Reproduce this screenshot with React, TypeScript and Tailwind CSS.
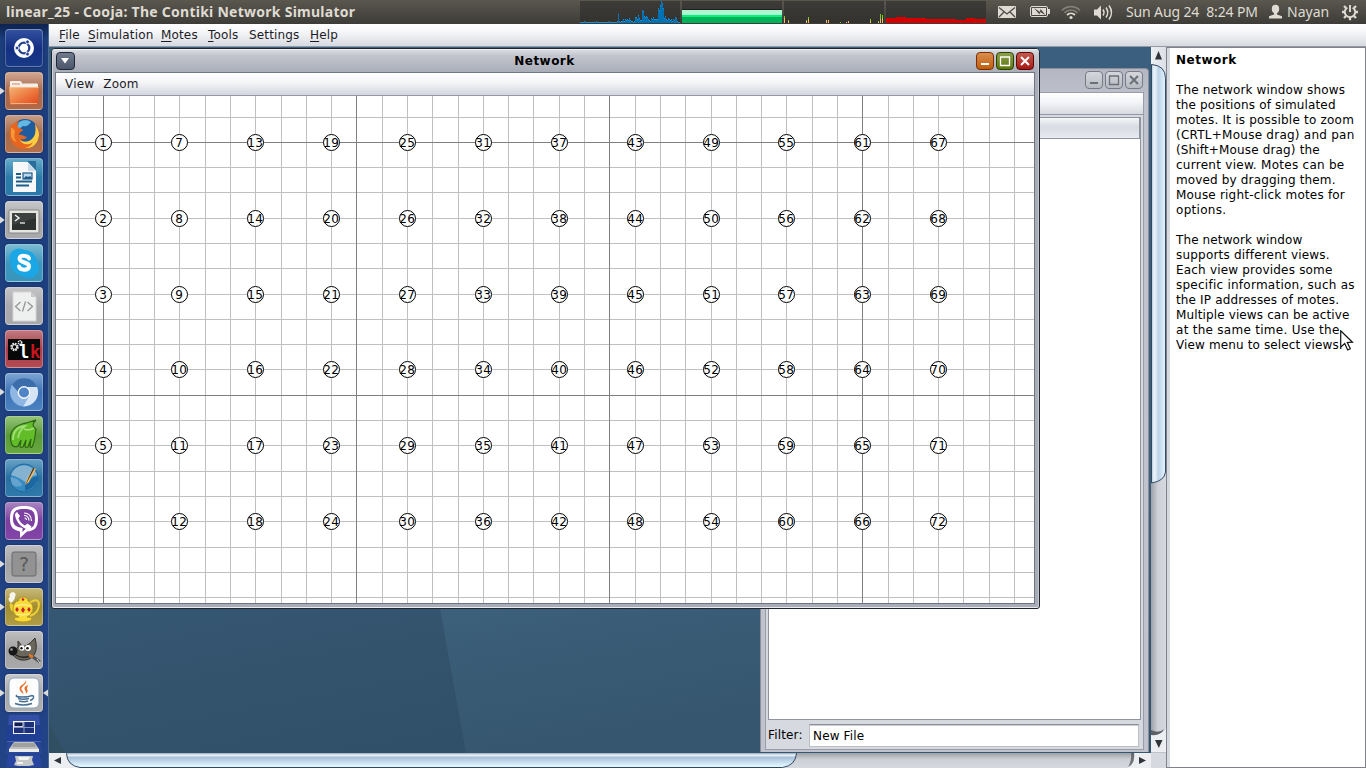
import React from "react";

const range = (a: number, b: number) => Array.from({ length: b - a + 1 }, (_, i) => a + i);

/* ---------- top panel ---------- */

const cpu = [
  1, 1, 1, 1, 2, 1, 1, 1, 1, 1, 1, 1, 1, 1, 1, 1, 2, 1, 1, 1, 1, 1, 1, 1, 1, 1, 1, 1, 1, 2, 1, 1, 1, 1, 1, 1, 1, 2, 9, 2,
  1, 2, 2, 4, 2, 4, 3, 4, 3, 5, 3, 2, 2, 1, 2, 6, 6, 4, 8, 5, 3, 3, 13, 12, 7, 6, 7, 6, 4, 3, 2, 5, 4, 6, 4, 4, 4, 4,
  15, 13, 18, 22, 20, 15, 5, 7, 4, 3, 5, 4, 3, 4, 2, 4, 3, 6, 5, 2, 1, 1,
];
const net: [number, number, number][] = [
  [0, 2, 5], [4, 1, 2], [22, 1, 2], [24, 2, 4], [42, 0, 3], [44, 0, 3], [56, 1, 0],
  [62, 0, 1], [64, 0, 2], [86, 2, 2], [94, 1, 1], [96, 5, 4], [98, 3, 5],
];

function Monitor({ children }: { children: React.ReactNode }) {
  return (
    <svg width="100" height="22" viewBox="0 1 100 22" className="block bg-linear-to-b from-[#3c3b37] to-[#33322e]" shapeRendering="crispEdges">
      {children}
    </svg>
  );
}

function TopPanel() {
  return (
    <div className="flex h-6 shrink-0 items-center bg-linear-to-b from-[#5a574e] to-[#3d3c38] font-['Noto_Sans',sans-serif] text-[#dfdbd2]">
      <div className="w-[580px] pl-1.5 text-[14px] leading-6 font-bold tracking-[0.26px] whitespace-nowrap">
        linear_25 - Cooja: The Contiki Network Simulator
      </div>
      <div className="flex w-[406px] gap-0.5">
        <Monitor>
          {cpu.map((h, i) => (
            <g key={i}>
              <rect x={i} y={23 - h} width="1" height={h} fill="#0072b3" />
              <rect x={i} y={23 - h} width="1" height="1" fill="#1590dc" />
            </g>
          ))}
        </Monitor>
        <Monitor>
          <rect y="9" width="100" height="1" fill="#20201d" />
          <rect y="10" width="100" height="5" fill="#aff5d0" />
          <rect y="15" width="100" height="2" fill="#00f47e" />
          <rect y="17" width="100" height="6" fill="#00b35b" />
        </Monitor>
        <Monitor>
          {net.map(([x, g, o], i) => (
            <g key={i}>
              <rect x={x} y={23 - o} width="1" height={o} fill="#fcba6a" />
              <rect x={x} y={23 - o - g} width="1" height={g} fill="#73d216" />
            </g>
          ))}
        </Monitor>
        <Monitor>
          <path d="M0 18h10v-1h10v1h20v1h30v1h10v-2h9v1h11v4H0z" fill="#d40000" />
        </Monitor>
      </div>
      <svg width="139" height="24" viewBox="986 0 139 24" fill="#dfdbd2">
        <rect x="998" y="6" width="18" height="12" rx="1" />
        <path d="M999 7.500l8 6.500 8-6.500M999 17l5-5M1015 17l-5-5" fill="none" stroke="#4b4943" strokeWidth="1.300" />
        <rect x="1030.500" y="6.500" width="17" height="10" rx="1.500" fill="none" stroke="#dfdbd2" />
        <rect x="1032" y="8" width="14" height="7" />
        <rect x="1048" y="9" width="2" height="5" />
        <path d="M1034 8l6 4 .500-3 5 6-5.500-3-.500 2.500z" fill="#43423d" />
        <g fill="none" strokeWidth="1.700">
          <path d="M1062 10.500a12.500 12.500 0 0 1 18 0" stroke="#827f77" />
          <path d="M1064.500 12.800a9 9 0 0 1 13 0" stroke="#827f77" />
          <path d="M1067 15a6 6 0 0 1 8 0" stroke="#dfdbd2" />
        </g>
        <circle cx="1071" cy="17.500" r="1.600" />
        <path d="M1094 9.500h3l4-4v14l-4-4h-3z" />
        <g fill="none" stroke="#dfdbd2" strokeWidth="1.500">
          <path d="M1103 9.500q2 3 0 6" />
          <path d="M1106 7.500q3.500 5 0 10" />
          <path d="M1109 5.500q5 7 0 14" />
        </g>
      </svg>
      <div className="w-[143px] pl-px text-[14px] leading-6 tracking-[-0.13px] whitespace-nowrap">Sun Aug 24&nbsp; 8:24 PM</div>
      <svg width="19" height="24" viewBox="1268 0 19 24" fill="#dfdbd2">
        <ellipse cx="1275.500" cy="9" rx="3.700" ry="4.200" />
        <path d="M1274 12h3v2.500l5 1.700v2.300h-13v-2.300l5-1.700z" />
      </svg>
      <div className="w-[53px] text-[14px] leading-6 whitespace-nowrap">Nayan</div>
      <svg width="24" height="24" viewBox="1340 0 24 24" fill="none" stroke="#dfdbd2">
        <path d="M1347.300 7.600a5.200 5.200 0 1 0 5.400 0" strokeWidth="1.900" />
        <path d="M1350 5v7" strokeWidth="1.900" />
        <path d="M1345.800 7.800l-1.800-1.800M1354.200 7.800l1.800-1.800M1344.800 12h-2.800M1355.200 12h2.800M1346 16l-2 2M1354 16l2 2M1350 17.500v2.800" strokeWidth="2.300" />
      </svg>
    </div>
  );
}

/* ---------- launcher ---------- */

function Tile({ bg, pip, active, children }: { bg: string; pip?: boolean; active?: boolean; children: React.ReactNode }) {
  return (
    <div className="flex h-[38px] w-12 shrink-0 items-center">
      <svg width="5" height="10" viewBox="0 0 5 10">{pip && <path d="M0 1.500L4.800 5 0 8.500z" fill="#dcdcdc" />}</svg>
      <div className={`h-[38px] w-[38px] rounded-[4px] border border-white/25 border-t-white/45 bg-linear-to-b shadow-[0_0_2px_rgba(0,0,30,0.5)] ${bg}`}>
        <svg width="36" height="36" viewBox="1 1 36 36">{children}</svg>
      </div>
      <svg width="5" height="10" viewBox="0 0 5 10">{active && <path d="M5 1.500L0 5l5 3.500z" fill="#dcdcdc" />}</svg>
    </div>
  );
}

function Launcher() {
  return (
    <div className="flex w-[49px] shrink-0 flex-col gap-[5px] overflow-hidden border-r border-[#4d6a95] bg-linear-to-b from-[#0d2350] via-[#1b3d7b] via-[2%] to-[#224385] pt-[5px]">
      <Tile bg="from-[#32509f] via-[#142f83] to-[#183a86]">
        <circle cx="19" cy="19" r="10" fill="#fff" />
        <circle cx="19" cy="19" r="5.300" fill="none" stroke="#24408e" strokeWidth="2.300" />
        <g stroke="#fff" strokeWidth="1">
          <path d="M19 19h-8M19 19l4-7M19 19l4 7" />
        </g>
        <circle cx="19" cy="19" r="3.800" fill="#fff" />
        <g fill="#24408e" stroke="#fff" strokeWidth=".8">
          <circle cx="12" cy="19" r="1.900" />
          <circle cx="22.500" cy="12.900" r="1.900" />
          <circle cx="22.500" cy="25.100" r="1.900" />
        </g>
      </Tile>
      <Tile bg="from-[#d0a692] via-[#a8694a] to-[#ae6a48]" pip>
        <defs>
          <linearGradient id="fold" x1="0" y1="0" x2="1" y2="1">
            <stop offset="0" stopColor="#f4b577" />
            <stop offset=".5" stopColor="#ee7c42" />
            <stop offset="1" stopColor="#e0451b" />
          </linearGradient>
        </defs>
        <path d="M5 10q0-1 1-1h9q1 0 1.500 1l.5 1.500h15q1 0 1 1V17H5z" fill="#f5efea" />
        <path d="M7 12h8" stroke="#df8560" />
        <path d="M4 15h30l-1 16q0 1.500-1.500 1.500h-25Q5 32.500 5 31z" fill="url(#fold)" />
        <path d="M4.500 15.500h29M6 31.500h26" stroke="#ffc08d" strokeWidth=".8" />
      </Tile>
      <Tile bg="from-[#c79c82] via-[#a56a48] to-[#b67049]">
        <circle cx="20" cy="17.500" r="13.500" fill="#1f5b9f" />
        <path d="M14 7q7-4 12 0-3 5-8 4-4 4-7 2z" fill="#61b8e0" />
        <path d="M6 10c-1 4-2 8-1 13 2 8 9 11 15 11 8 0 14-7 14-15 0-4-2-8-4-10 2 8 0 13-4 16-4 3-9 2-11-1 3 1 6 0 7-2-3 0-5-3-8-2 0-2 2-4 4-4 0-3-4-2-5-4-1-1-1-4 1-6-2 0-4 1-5 3-1 0-2 0-3 1z" fill="#e8651f" />
        <path d="M30 9c2 9-1 15-6 17-5 2-9 0-10-3 2 7 10 8 14 4-1 3-4 5-8 6 8 1 13-5 14-13 0-4-2-8-4-11z" fill="#f9ce42" />
        <path d="M6 13c2 0 4 2 4 4-1 3-1 7 2 10-4-1-6-4-6-7z" fill="#f59835" />
      </Tile>
      <Tile bg="from-[#63abc9] via-[#2c7cab] to-[#2b79aa]">
        <path d="M8 4h15l8 9v20q0 1-1 1H8z" fill="#f6f8fa" />
        <path d="M22 3h9v9z" fill="#2b6e9a" />
        <path d="M23 5v8h8z" fill="#c7dbe8" />
        <g stroke="#1e5d88" strokeWidth="1.800">
          <path d="M11 16h5M11 19.500h5M11 23.500h16M11 27.500h13" />
        </g>
        <rect x="18" y="15" width="9" height="6" fill="#bcd9ed" stroke="#1e5d88" strokeWidth="1.200" />
        <path d="M18 21l3-3 2 1 2-1 2 2v1z" fill="#1e5d88" />
      </Tile>
      <Tile bg="from-[#c7c7ca] via-[#a5a5a9] to-[#aaaaad]" pip>
        <rect x="4" y="9" width="30" height="23" rx="1" fill="#e6e6e1" stroke="#868686" />
        <rect x="7" y="12" width="24" height="17" fill="#2d312f" />
        <path d="M10 14l4 3-4 3" fill="none" stroke="#f2f2f2" strokeWidth="1.500" />
        <path d="M15 22h5" stroke="#f2f2f2" strokeWidth="1.300" />
        <path d="M7 12h24v5L7 24z" fill="#fff" opacity=".08" />
      </Tile>
      <Tile bg="from-[#7abbd2] via-[#3c97be] to-[#3a95bd]">
        <circle cx="14" cy="14" r="9.500" fill="#1ba7e5" />
        <circle cx="24" cy="24" r="10" fill="#1ba7e5" />
        <circle cx="19" cy="19" r="13" fill="#1ba7e5" />
        <path d="M24 14.500c-1-3.500-9.500-4-9.500 0 0 5 10 3 9.500 8-.5 4.500-9 4-10 0" fill="none" stroke="#fff" strokeWidth="4" strokeLinecap="round" />
      </Tile>
      <Tile bg="from-[#c4c4c6] via-[#aaaaae] to-[#a9a9ac]">
        <path d="M8 5h18l5 5v24H8z" fill="#eeefef" stroke="#d5d5d5" />
        <path d="M26 5v5h5z" fill="#c8c8c8" />
        <path d="M15.500 15l-5 4.500 5 4.500M22.500 15l5 4.500-5 4.500M20.500 14.500l-3 10" fill="none" stroke="#969696" strokeWidth="1.300" />
      </Tile>
      <Tile bg="from-[#bf777f] via-[#ae3a46] to-[#b34b54]">
        <rect x="3" y="9" width="32" height="21" fill="#080808" />
        <g fill="none" stroke="#e9e9e9">
          <circle cx="9.500" cy="17" r="3.200" strokeWidth="2" strokeDasharray="1.700 .8" />
          <circle cx="9.500" cy="17" r="2.300" />
          <circle cx="15" cy="12.500" r="1.700" strokeWidth="1.600" strokeDasharray="1.100 .6" />
        </g>
        <text x="19" y="28" textAnchor="middle" fontSize="17" fontWeight="bold" fontFamily="DejaVu Sans Mono, monospace" fill="#fff">l</text>
        <text x="30" y="28" textAnchor="middle" fontSize="17" fontWeight="bold" fontFamily="DejaVu Sans Mono, monospace" fill="#c9151d">k</text>
      </Tile>
      <Tile bg="from-[#7aa3d1] via-[#3e73b5] to-[#4a82c1]" pip>
        <circle cx="19" cy="19.500" r="14" fill="#78a4d9" />
        <path d="M7 12a14 14 0 0 1 25 2H19q-4 0-6 5z" fill="#3b6dab" />
        <path d="M7 12q-4 8 1 15 4 6 10 6l5-8q-6 1-9-5z" fill="#90b6e3" />
        <path d="M32 14q3 7-2 14-4 5-12 5.500l6-10q2-6-2-9.500z" fill="#d6e5f6" />
        <circle cx="19" cy="19.500" r="6.400" fill="#f5f9fd" />
        <circle cx="19" cy="19.500" r="5" fill="#5084c6" />
      </Tile>
      <Tile bg="from-[#93c477] via-[#5b9b37] to-[#67a83f]">
        <path d="M7 29c-4-10 0-18 10-21 5-1 8-2 14-4-4 4-4 6 0 9-1 9-2 15-4 18-1 1-2 0-2-1l1-7-3 8q-3 1-3-1l1-6-3 7q-3 1-3-1l1-6-3 6q-3 2-6-1z" fill="#61bd28" stroke="#2d6415" strokeWidth="1.200" />
        <path d="M8 24c0-8 4-13 12-14-4 3-6 6-7 12M19 13q5 2 10-1" fill="none" stroke="#a1dd76" strokeWidth="1.800" />
      </Tile>
      <Tile bg="from-[#66a1c5] via-[#28709f] to-[#2f79aa]">
        <circle cx="19" cy="19" r="14" fill="#348bc2" stroke="#2368a0" />
        <path d="M6 16a13.500 13.500 0 0 1 26 0q-7 1-12 7-6-5-14-7z" fill="#85b2d0" />
        <path d="M5.500 18q8 1 12 8-5 3-10 0-2-4-2-8z" fill="#6fa9cf" opacity=".8" />
        <path d="M20 26q5-8 13-9-1 12-13 15z" fill="#1c68a2" />
        <path d="M20 26l1-4 7-13 3 1-7 13z" fill="#f2bd60" />
        <path d="M28 9l1.500.5-7.500 14-2 3z" fill="#3c3c3c" />
      </Tile>
      <Tile bg="from-[#a883c0] via-[#7b3f9f] to-[#8345a8]">
        <path d="M19 4c10 0 14 3 14 13 0 9-4 12-11 12.500L15 36v-6.500C8 28 5 25 5 17 5 7 9 4 19 4z" fill="#fff" />
        <path d="M19 7c8 0 11 2 11 10s-3 9.500-9 9.500L17.500 30v-4C11 25 8 23 8 17 8 9 11 7 19 7z" fill="#7d41a2" />
        <path d="M12 10l3 4-1.500 2.500q2 5 6.500 7l2.500-2 4 3q-1.500 3.500-4 3C16 25 11 20 10 13q0-2 2-3z" fill="#fff" />
        <path d="M19 11q7 0 7.500 8M19 13.500q4.500 0 5 5M19.500 16q2 0 2 2" fill="none" stroke="#fff" strokeWidth="1.200" />
      </Tile>
      <Tile bg="from-[#bcbcbf] via-[#a5a5a8] to-[#adadaf]" pip>
        <rect x="7" y="7" width="24" height="24" rx="2" fill="#929292" stroke="#696969" />
        <text x="19" y="26" textAnchor="middle" fontSize="19" fontFamily="DejaVu Sans, sans-serif" fill="#595959">?</text>
      </Tile>
      <Tile bg="from-[#c6b977] via-[#a18d30] to-[#b19d46]" pip>
        <path d="M24 15q9-6 10 1 0 9-9 12" fill="none" stroke="#edce35" strokeWidth="2" />
        <path d="M9 24q-5-1-4-9 3 1 5 4z" fill="#efcf36" />
        <path d="M5 14q-3-3 0-5-2-4 3-5 4 1 2 5 0 3-4 6z" fill="#f6f4ec" />
        <path d="M8 21q0-7 6-8.500Q13 10 19 9q5 1 4 4 5 2 5 8-1 6-6 8 5 0 5 2-2 3-9 3t-9-3q0-2 5-2-6-2-6-8z" fill="#f7db39" stroke="#ab8716" strokeWidth=".7" />
        <path d="M10 18q8-3 16 0M11 26q7 2 14 0" fill="none" stroke="#fff49e" />
        <g fill="#cc1f27">
          <path d="M12 19l1.800 2.500L12 24l-1.800-2.500zM18 19l2 3-2 3-2-3zM24 19l1.800 2.500L24 24l-1.800-2.500z" />
          <circle cx="18" cy="11.500" r="1.300" />
        </g>
      </Tile>
      <Tile bg="from-[#bdbdbd] via-[#a2a2a4] to-[#a9a9a9]">
        <path d="M30 7q3 11-1 17-4 6-13 5Q8 27 6 20q6-1 8-5 7 3 16-8z" fill="#6b675c" stroke="#34322d" />
        <path d="M13 16l0-6 4 5" fill="#6b675c" stroke="#34322d" />
        <circle cx="8" cy="20" r="4.500" fill="#171717" />
        <circle cx="6.500" cy="18.500" r="1.300" fill="#989898" />
        <circle cx="17" cy="17" r="2.700" fill="#fff" />
        <circle cx="23" cy="17" r="3" fill="#fff" />
        <circle cx="16.500" cy="17.300" r="1.200" fill="#111" />
        <circle cx="22.500" cy="17.300" r="1.300" fill="#111" />
        <path d="M11 24q6 4 14 1" fill="none" stroke="#222" strokeWidth="1.400" />
        <path d="M24 24l5 2.500" stroke="#e77524" strokeWidth="2.600" />
        <path d="M28 26l7 5" stroke="#4e5256" strokeWidth="3" />
        <path d="M32 28l3 4" stroke="#dfdfdf" strokeWidth="1" />
      </Tile>
      <Tile bg="from-[#c7c7c8] via-[#a7a7a8] to-[#afafb0]" pip active>
        <rect x="4" y="4" width="30" height="30" rx="5" fill="#fdfdfd" stroke="#8fa9bd" />
        <path d="M21 6q1 3-3 6-3 3-.5 5 1 2 1 3-6-4-3-8 5-3 5.500-6zM23 11q-5 2-3 5t0 4q4-2 2-5 0-1 1-4z" fill="#e66f25" />
        <g fill="none" stroke="#476f93" strokeWidth="1.400">
          <path d="M12 21q-3 2 5 2t9-1.500M13 24.500q5 1.500 11 0M14 27q5 1.500 9 0M10 29.500q8 3 17 0M26 21.500q4 0 2 3-1 1.500-3 2" />
        </g>
      </Tile>
      <div className="-mt-0.5 flex flex-col items-center">
        <svg width="36" height="27" viewBox="0 0 36 27">
          <path d="M3 0h30l3 26H0z" fill="#203e94" />
          <path d="M3 0h30l1 10H2z" fill="#3350a6" />
          <rect x="7.500" y="6.500" width="21" height="12" fill="#1b327b" stroke="#f0f0f0" />
          <path d="M18 7v11M8 12.500h20" stroke="#8a96c2" />
          <path d="M8 7h9v4.500H8z" fill="#0f1d50" stroke="#fff" strokeWidth=".8" />
          <path d="M1 26.500h34" stroke="#4b67ae" />
        </svg>
        <svg width="36" height="13" viewBox="0 0 36 13">
          <path d="M2 0h32l2 12H0z" fill="#29479a" />
          <path d="M8 0h20l5 7H3z" fill="#bfc0bf" />
          <path d="M3 7h30v3H3z" fill="#ececea" />
          <path d="M8 1h20l2 4H6z" fill="#8a8c8d" opacity=".6" />
        </svg>
        <svg width="36" height="13" viewBox="0 0 36 13">
          <path d="M2 0h32l2 12H0z" fill="#2846a0" />
          <path d="M9 1h18l-1 4 2 5-5 1H12l-4-1 2-4z" fill="#c7c9c9" />
          <path d="M12 2h12l-2 3H13zM11 7h6v2h-6z" fill="#f2f2f2" />
        </svg>
      </div>
    </div>
  );
}

/* ---------- desktop windows ---------- */

function WinButton({ kind, tone }: { kind: "min" | "max" | "close"; tone: string }) {
  return (
    <div className={`flex h-[18px] w-[18px] items-center justify-center rounded-[4px] border bg-linear-to-b ${tone}`}>
      <svg width="16" height="16" viewBox="0 0 16 16" fill="none" stroke="currentColor">
        {kind === "min" && <path d="M4 11h8" strokeWidth="2" />}
        {kind === "max" && <path d="M3 4h10M3.500 4v8.500h9V4" strokeWidth="1.300" />}
        {kind === "close" && <path d="M4 4l8 8M12 4l-8 8" strokeWidth="2" />}
      </svg>
    </div>
  );
}

const gridX = (k: number) => Math.round(103.45 + 25.294 * k);
const gridY = (k: number) => Math.round(141.83 + 25.294 * k);

function NetworkCanvas() {
  return (
    <svg width="978" height="507" viewBox="56 96 978 507" className="block bg-white">
      <g shapeRendering="crispEdges">
        {range(-1, 36).map((k) => (
          <rect key={k} x={gridX(k)} y="96" width="1" height="507" fill="#c0c0c0" />
        ))}
        {range(-1, 18).map((k) => (
          <rect key={k} x="56" y={gridY(k)} width="978" height="1" fill="#c0c0c0" />
        ))}
        {[0, 10, 20, 30].map((k) => (
          <rect key={k} x={gridX(k)} y="96" width="1" height="507" fill="#808080" />
        ))}
        {[0, 10].map((k) => (
          <rect key={k} x="56" y={gridY(k)} width="978" height="1" fill="#808080" />
        ))}
      </g>
      {range(0, 71).map((n) => {
        const x = gridX(3 * Math.floor(n / 6));
        const y = gridY(3 * (n % 6));
        return (
          <g key={n}>
            <circle cx={x + 0.5} cy={y + 0.5} r="8" fill="#fff" stroke="#000" />
            <text x={x + 0.2} y={y + 5} textAnchor="middle" fontSize="12" letterSpacing="0.36" fontFamily="DejaVu Sans, sans-serif">
              {n + 1}
            </text>
          </g>
        );
      })}
    </svg>
  );
}

function NetworkWindow() {
  return (
    <div className="absolute top-[1px] left-[2px] flex h-[561px] w-[989px] flex-col rounded-t-[4px] rounded-b-[3px] border border-[#1f262e] bg-[#a9aeb9]">
      <div className="flex flex-1 flex-col rounded-[3px] border border-t-[#eceef0] border-r-[#c4c8d0] border-b-[#e9ebee] border-l-[#d0d3d9] bg-linear-to-b from-[#d9dce1] via-[#c3c6ce] via-[1%] to-[#a9adb8] to-[4%]">
        <div className="flex h-[22px] items-center justify-between pr-[4px] pl-[3px]">
          <div className="flex h-[18px] w-[19px] items-center justify-center rounded-[4px] border border-[#1e2638] bg-linear-to-b from-[#717b8d] to-[#4b566b]">
            <svg width="9" height="6" viewBox="0 0 9 6"><path d="M0 0h8L4 5.500z" fill="#fff" /></svg>
          </div>
          <div className="pl-[38px] text-[12px] font-bold tracking-[0.45px] text-black">Network</div>
          <div className="flex gap-[2px]">
            <WinButton kind="min" tone="border-[#7c2d05] from-[#d98e4b] to-[#c05e05] text-white" />
            <WinButton kind="max" tone="border-[#2c4207] from-[#8da04c] to-[#5d7700] text-white" />
            <WinButton kind="close" tone="border-[#5d0705] from-[#c4584f] to-[#a61410] text-white" />
          </div>
        </div>
        <div className="mx-[2px] flex w-[980px] flex-col border border-[#6c7685]">
          <div className="flex h-[23px] items-center gap-[9px] border-b border-[#9597a4] bg-linear-to-b from-white via-[#f3f4f7] via-45% to-[#d3d6de] pl-[9px] text-[#1c1c26]">
            <span className="tracking-[0.2px]">View</span>
            <span className="tracking-[0.2px]">Zoom</span>
          </div>
          <NetworkCanvas />
        </div>
      </div>
    </div>
  );
}

function EditorWindow() {
  const tone = "border-[#777b86] from-[#d5d7dc] to-[#b7bac2] text-[#6b6f78]";
  return (
    <div className="absolute top-[21px] left-[711px] flex h-[684px] w-[389px] flex-col rounded-t-[4px] border border-b-0 border-[#8b8d98] bg-linear-to-b from-[#b4b7c1] to-[#c0c3cd] to-[5%] pb-[2px]">
      <div className="flex h-[23px] items-start justify-end gap-[2px] pt-[2px] pr-[5px]">
        <WinButton kind="min" tone={tone} />
        <WinButton kind="max" tone={tone} />
        <WinButton kind="close" tone={tone} />
      </div>
      <div className="mr-[4px] ml-[4px] flex flex-1 flex-col border border-[#9a9da8] bg-[#d6d9df]">
        <div className="h-[22px] border-b border-[#9597a4] bg-linear-to-b from-white via-[#f3f4f7] via-45% to-[#d6d9df]" />
        <div className="mt-[2px] mr-[2px] ml-[2px] flex h-[603px] flex-col border border-[#9094a0] bg-white">
          <div className="h-[21px] border-r border-b border-[#9094a0] bg-linear-to-b from-[#f5f6f8] via-[#d8dbe2] via-45% to-[#e8ebf1]" />
        </div>
        <div className="flex flex-1 items-center justify-between pt-px pr-[4px] pl-[2px]">
          <span className="tracking-[0.15px]">Filter:</span>
          <div className="h-[23px] w-[330px] border border-[#bdbfc6] border-t-[#8c8e98] bg-white pl-[3px] leading-[22px] tracking-[0.15px] shadow-[inset_0_2px_1px_-1px_#c9cbd1]">New File</div>
        </div>
      </div>
    </div>
  );
}

function Desktop() {
  return (
    <div className="relative h-[706px] w-[1102px] overflow-hidden bg-[#3a5d7b]">
      <svg width="1102" height="706" className="block">
        <defs>
          <linearGradient id="deskA" x1="0" y1="0" x2=".3" y2="1">
            <stop offset="0" stopColor="#3a6080" />
            <stop offset=".65" stopColor="#385a76" />
            <stop offset="1" stopColor="#304f68" />
          </linearGradient>
          <linearGradient id="deskB" x1="0" y1="0" x2=".2" y2="1">
            <stop offset="0" stopColor="#3a6080" />
            <stop offset=".8" stopColor="#3c5f7a" />
            <stop offset="1" stopColor="#35566e" />
          </linearGradient>
        </defs>
        <rect width="1102" height="706" fill="url(#deskA)" />
        <path d="M300 0L391 561l26 145h685V0z" fill="url(#deskB)" />
        <path d="M0 677l16 29H0z" fill="#305061" />
      </svg>
      <EditorWindow />
      <NetworkWindow />
    </div>
  );
}

function VerticalScrollbar() {
  return (
    <svg width="15" height="706" viewBox="1151 47 15 706" className="block">
      <defs>
        <linearGradient id="vt"><stop offset="0" stopColor="#9da0a8" /><stop offset=".45" stopColor="#cdd0d6" /><stop offset="1" stopColor="#d6d9df" /></linearGradient>
        <linearGradient id="vth"><stop offset="0" stopColor="#b1c6d9" /><stop offset=".2" stopColor="#eef6fb" /><stop offset=".5" stopColor="#bdd3e6" /><stop offset="1" stopColor="#e5f5ff" /></linearGradient>
        <linearGradient id="vb"><stop offset="0" stopColor="#eef0f3" /><stop offset="1" stopColor="#dcdfe4" /></linearGradient>
      </defs>
      <rect x="1151" y="47" width="15" height="706" fill="url(#vt)" />
      <path d="M1151 47h15v28q-2-10-15-11z" fill="url(#vb)" />
      <path d="M1151.500 64.500q14 1 14 14V472q-1 9-14 11z" fill="url(#vth)" stroke="#314b65" />
      <path d="M1158.500 51l3.500 8.500h-7z" fill="#30353c" />
      <path d="M1151 731q11 4 15-2v24h-15z" fill="#eceef1" />
      <path d="M1151 730q8 4 13-1-3 7-13 6z" fill="#5c5f65" />
      <path d="M1155 740h7.500l-3.700 8z" fill="#30353c" />
      <path d="M1151 752.500h15" stroke="#bfc2c8" />
    </svg>
  );
}

function HorizontalScrollbar() {
  return (
    <svg width="1117" height="15" viewBox="49 753 1117 15" className="block">
      <defs>
        <linearGradient id="ht" x2="0" y2="1"><stop offset="0" stopColor="#9da0a8" /><stop offset=".4" stopColor="#cbced3" /><stop offset="1" stopColor="#d6d9df" /></linearGradient>
        <linearGradient id="hth" x2="0" y2="1"><stop offset="0" stopColor="#a9bccd" /><stop offset=".12" stopColor="#edf4f9" /><stop offset=".28" stopColor="#a9c1d7" /><stop offset=".6" stopColor="#c5dced" /><stop offset=".9" stopColor="#e2f7ff" /></linearGradient>
      </defs>
      <rect x="49" y="753" width="1117" height="15" fill="url(#ht)" />
      <path d="M49 753h18q0 12 12 15H49z" fill="#eceef1" />
      <path d="M66.500 753.500H796.500q-1 12-14 14H80q-13-2-13.500-14z" fill="url(#hth)" stroke="#304960" />
      <path d="M67 753.500h729" stroke="#a8b8c9" />
      <path d="M54 760.500l7-3.500v7z" fill="#30353c" />
      <path d="M1134 753h17v15h-24q9-4 7-15z" fill="#eceef1" />
      <path d="M1134 753q1 11-6 14 4-6 3-14z" fill="#55585e" opacity=".8" />
      <path d="M1146 760.500l-7-3.500v7z" fill="#30353c" />
      <path d="M1151 753h15v15h-15z" fill="#d6d9df" />
    </svg>
  );
}

const help: [string, string][] = [
  ["", ""],
  ["The network window shows", "tracking-[0.16px]"],
  ["the positions of simulated", "tracking-[0.15px]"],
  ["motes. It is possible to zoom", "tracking-[0.21px]"],
  ["(CRTL+Mouse drag) and pan", "tracking-[0.25px]"],
  ["(Shift+Mouse drag) the", "tracking-[0.15px]"],
  ["current view. Motes can be", "tracking-[0.27px]"],
  ["moved by dragging them.", "tracking-[0.15px]"],
  ["Mouse right-click motes for", "tracking-[0.2px]"],
  ["options.", "tracking-[0.3px]"],
  ["", ""],
  ["The network window", "tracking-[0.12px]"],
  ["supports different views.", "tracking-[0.2px]"],
  ["Each view provides some", "tracking-[0.19px]"],
  ["specific information, such as", "tracking-[0.25px]"],
  ["the IP addresses of motes.", "tracking-[0.15px]"],
  ["Multiple views can be active", "tracking-[0.13px]"],
  ["at the same time. Use the", "tracking-[0.28px]"],
  ["View menu to select views.", "tracking-[0.13px]"],
];

function HelpPanel() {
  return (
    <div className="relative flex w-[200px] shrink-0 border border-[#7f818b] bg-white">
      <div className="w-[3px] bg-[#d6d9df]" />
      <div className="pt-[5px] pl-[6px] leading-[15px] whitespace-nowrap text-black">
        <div className="h-[15px] font-bold tracking-[0.5px]">Network</div>
        {help.map(([line, tracking], i) => (
          <div key={i} className={`h-[15px] ${tracking}`}>{line}</div>
        ))}
      </div>
      <svg width="14" height="22" viewBox="0 0 14 22" className="absolute top-[282px] left-[173px]">
        <path d="M.7.700v16.500l4-3.700 3 6.500 2.600-1.200-3-6.300 5.200-.3z" fill="#fff" stroke="#111" strokeWidth="1.200" />
      </svg>
    </div>
  );
}

const menus: [string, string, string][] = [
  ["F", "ile", "w-[29px]"], ["S", "imulation", "w-[73px]"], ["M", "otes", "w-[47px]"], ["T", "ools", "w-[41px]"], ["", "Settings", "w-[61px]"], ["H", "elp", "w-[40px]"],
];

export default function App() {
  return (
    <div className="flex h-[768px] w-[1366px] flex-col overflow-hidden bg-[#d6d9df] font-['DejaVu_Sans',sans-serif] text-[12px] text-black">
      <TopPanel />
      <div className="flex min-h-0 flex-1">
        <Launcher />
        <div className="flex min-w-0 flex-1 flex-col">
          <div className="flex h-[23px] shrink-0 items-center border-b border-[#9698a4] bg-linear-to-b from-white via-[#f2f3f6] via-45% to-[#d6d9df] pl-[10px] text-[#1c1c26]">
            {menus.map(([m, rest, w]) => (
              <div key={rest} className={`whitespace-nowrap tracking-[0.15px] ${w}`}>
                <span className="underline underline-offset-2">{m}</span>
                {rest}
              </div>
            ))}
          </div>
          <div className="flex min-h-0 flex-1">
            <div className="w-[1117px]">
              <div className="flex">
                <Desktop />
                <VerticalScrollbar />
              </div>
              <HorizontalScrollbar />
            </div>
            <HelpPanel />
          </div>
        </div>
      </div>
    </div>
  );
}
